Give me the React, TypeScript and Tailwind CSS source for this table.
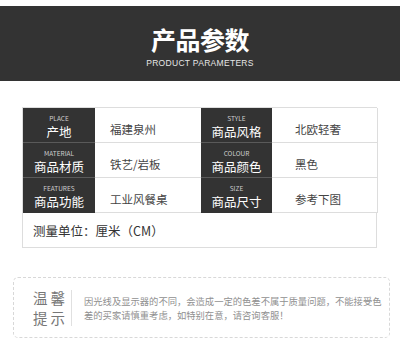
import React from "react";

const cjk = { fontFamily: '"Noto Sans CJK SC", "Noto Sans", sans-serif' };

type Cell = { en: string; zh: string; value: string };

const rows: [Cell, Cell][] = [
  [
    { en: "PLACE", zh: "产地", value: "福建泉州" },
    { en: "STYLE", zh: "商品风格", value: "北欧轻奢" },
  ],
  [
    { en: "MATERIAL", zh: "商品材质", value: "铁艺/岩板" },
    { en: "COLOUR", zh: "商品颜色", value: "黑色" },
  ],
  [
    { en: "FEATURES", zh: "商品功能", value: "工业风餐桌" },
    { en: "SIZE", zh: "商品尺寸", value: "参考下图" },
  ],
];

const Label = ({ en, zh, last }: { en: string; zh: string; last: boolean }) => (
  <div
    className={`h-[35px] bg-[#333333] flex flex-col items-center pt-[6px] ${
      last ? "" : "border-b border-[#5a5a5a]"
    }`}
  >
    <span className="text-[6.5px] leading-[8px] text-[#cfcfcf]">{en}</span>
    <span className="mt-[3px] text-[12.5px] leading-[14px] text-white">{zh}</span>
  </div>
);

const Value = ({ text, pad, last }: { text: string; pad: string; last?: boolean }) => (
  <div
    className={`h-[35px] flex items-center pt-[10px] text-[11.5px] text-[#444] ${pad} ${
      last ? "border-r border-[#dddddd]" : ""
    } border-b border-[#dddddd]`}
  >
    {text}
  </div>
);

export default function App() {
  return (
    <div className="w-[400px] h-[345px] bg-white overflow-hidden" style={cjk}>
      <div className="mt-[6px] h-[75px] bg-[#333333] flex flex-col items-center">
        <div className="pt-[20px] text-[25px] leading-[27px] font-bold text-white tracking-[-0.5px]">
          产品参数
        </div>
        <div
          className="mt-[5px] text-[8.5px] leading-[10px] text-[#e6e6e6] tracking-[0.3px]"
          style={{ fontFamily: '"Liberation Sans", sans-serif' }}
        >
          PRODUCT PARAMETERS
        </div>
      </div>

      <div className="mt-[26px] ml-[22px] w-[355px] border-t border-l border-[#dddddd]">
        <div className="grid grid-cols-[72px_106px_71px_106px]">
          {rows.map(([a, b], i) => (
            <React.Fragment key={a.en}>
              <Label en={a.en} zh={a.zh} last={i === rows.length - 1} />
              <Value text={a.value} pad="pl-[15px]" />
              <Label en={b.en} zh={b.zh} last={i === rows.length - 1} />
              <Value text={b.value} pad="pl-[23px]" last />
            </React.Fragment>
          ))}
        </div>
        <div className="h-[35px] flex items-center pl-[10px] pt-[2px] text-[12.5px] text-[#333] border-r border-b border-[#dddddd]">
          测量单位：厘米（CM）
        </div>
      </div>

      <div className="mt-[29px] ml-[13px] w-[377px] h-[61px] border border-dashed border-[#d8d8d8] rounded-[5px] flex items-center">
        <div className="shrink-0 ml-[19px] text-[14.5px] leading-[20px] text-[#777] tracking-[3px] whitespace-nowrap">
          <div>温馨</div>
          <div>提示</div>
        </div>
        <div className="shrink-0 ml-[3px] w-px h-[36px] bg-[#e0e0e0]" />
        <div className="ml-[12px] text-[9.3px] leading-[14px] text-[#909090] whitespace-nowrap">
          <div>因光线及显示器的不同，会造成一定的色差不属于质量问题，不能接受色</div>
          <div>差的买家请慎重考虑，如特别在意，请咨询客服！</div>
        </div>
      </div>
    </div>
  );
}
